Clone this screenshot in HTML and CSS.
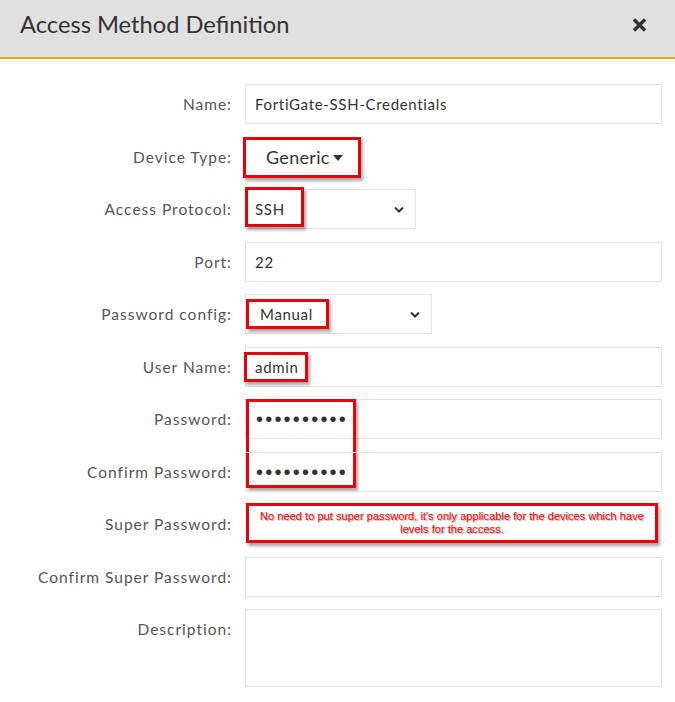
FILE: index.html
```html
<!DOCTYPE html>
<html>
<head>
<meta charset="utf-8">
<link rel="stylesheet" href="styles.css">
</head>
<body>
<div class="modal">
  <div class="header">
    <h1 class="title">Access Method Definition</h1>
    <svg class="close" width="15" height="14" viewBox="0 0 15 14"><path d="M2 1.5 L13 12.5 M13 1.5 L2 12.5" stroke="#333" stroke-width="3.4" stroke-linecap="butt" fill="none"/></svg>
  </div>
  <div class="form">
    <div class="label">Name:</div>
    <div class="field"><div class="input">FortiGate-SSH-Credentials</div></div>

    <div class="label">Device Type:</div>
    <div class="field">
      <div class="devtype">Generic<span class="caret"></span></div>
      <span class="mark mark-dev"></span>
    </div>

    <div class="label">Access Protocol:</div>
    <div class="field">
      <div class="input select sel-proto">SSH<svg class="chev" width="10" height="7" viewBox="0 0 10 7"><polyline points="1,1.5 5,5.5 9,1.5" fill="none" stroke="#333" stroke-width="2"/></svg></div>
      <span class="mark mark-ssh"></span>
    </div>

    <div class="label">Port:</div>
    <div class="field"><div class="input">22</div></div>

    <div class="label">Password config:</div>
    <div class="field">
      <div class="input select sel-pw">Manual<svg class="chev" width="10" height="7" viewBox="0 0 10 7"><polyline points="1,1.5 5,5.5 9,1.5" fill="none" stroke="#333" stroke-width="2"/></svg></div>
      <span class="mark mark-manual"></span>
    </div>

    <div class="label">User Name:</div>
    <div class="field">
      <div class="input">admin</div>
      <span class="mark mark-admin"></span>
    </div>

    <div class="label">Password:</div>
    <div class="field">
      <div class="input dots">••••••••••</div>
      <span class="mark mark-pw"></span>
    </div>

    <div class="label">Confirm Password:</div>
    <div class="field"><div class="input dots">••••••••••</div></div>

    <div class="label">Super Password:</div>
    <div class="field">
      <div class="note">No need to put super password, it's only applicable for the devices which have levels for the access.</div>
    </div>

    <div class="label">Confirm Super Password:</div>
    <div class="field"><div class="input"></div></div>

    <div class="label">Description:</div>
    <div class="field"><div class="input textarea"></div></div>
  </div>
</div>
</body>
</html>
```
FILE: styles.css
```css
* { box-sizing: border-box; }
html, body { margin: 0; padding: 0; background: #fff; }
body { font-family: Lato, "Open Sans", sans-serif; width: 675px; height: 702px; overflow: hidden; }

.header {
  height: 59px;
  background: #e0e0e0;
  border-bottom: 2px solid #f5a21e;
  display: flex;
  align-items: center;
  justify-content: space-between;
  padding: 0 28px 10px 20px;
}
.title {
  margin: 0;
  font-weight: 400;
  font-size: 23.7px;
  color: #333;
}
.close { display: block; margin-top: 2px; }

.form {
  display: grid;
  grid-template-columns: 232px 417px;
  column-gap: 13px;
  row-gap: 12.5px;
  padding-top: 25px;
}
.label {
  text-align: right;
  font-size: 15.5px;
  line-height: 40px;
  color: #555;
  letter-spacing: 1px;
  padding-right: 0;
}
.field { position: relative; min-height: 40px; }
.input {
  height: 40px;
  border: 1px solid #e2e2e2;
  padding: 0 9px;
  font-size: 15px;
  line-height: 38px;
  color: #333;
  letter-spacing: 0.68px;
  display: flex;
  align-items: center;
}
.select { justify-content: space-between; padding-right: 11px; }
.sel-proto { width: 171px; }
.sel-pw { width: 187px; padding-left: 14px; }
.dots {
  font-family: "Liberation Sans", Arial, sans-serif;
  font-size: 20px;
  letter-spacing: 2.2px;
  color: #333;
  padding-left: 10px;
}
.textarea { height: 78px; }
.devtype {
  height: 40px;
  padding-left: 21px;
  font-size: 18px;
  letter-spacing: 0.3px;
  color: #333;
  display: flex;
  align-items: center;
}
.caret {
  display: inline-block;
  width: 0; height: 0;
  border-left: 5px solid transparent;
  border-right: 5px solid transparent;
  border-top: 6px solid #333;
  margin-left: 3px;
  margin-top: 2px;
}
.note {
  margin: -1px 4px 0 1px;
  height: 40px;
  border: 3px solid #e8000b;
  box-shadow: 2px 3px 3px rgba(0,0,0,0.35);
  font-family: "Liberation Sans", Arial, sans-serif;
  font-size: 11.1px;
  line-height: 13px;
  color: #ff0000;
  text-align: center;
  padding: 4px 4px 0;
  text-shadow: 1px 1px 1px rgba(0,0,0,0.35);
}
.mark {
  position: absolute;
  border: 3px solid #e8000b;
  box-shadow: 2px 3px 3px rgba(0,0,0,0.35);
  pointer-events: none;
}
.mark-dev { left: -2px; top: 0.5px; width: 118px; height: 41px; }
.mark-ssh { left: 0; top: -2px; width: 59px; height: 40px; }
.mark-manual { left: 1px; top: 5px; width: 83px; height: 30px; }
.mark-admin { left: -1px; top: 5.5px; width: 64px; height: 30px; }
.mark-pw { left: 1px; top: 0; width: 110px; height: 89px; }
```
